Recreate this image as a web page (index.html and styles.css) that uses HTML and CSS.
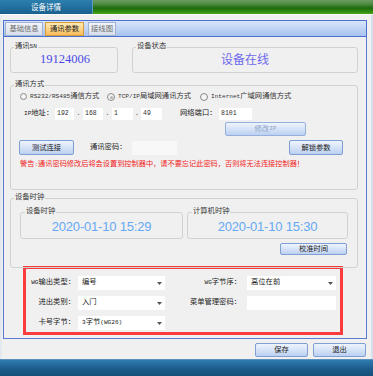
FILE: index.html
```html
<!DOCTYPE html>
<html>
<head>
<meta charset="utf-8">
<link rel="stylesheet" href="styles.css">
</head>
<body>
<div class="titlebar">
  <div class="title-tab">设备详情</div>
  <div class="title-rest"></div>
</div>
<div class="window">
  <div class="tabstrip">
    <div class="tab t1">基础信息</div>
    <div class="tab t2 active">通讯参数</div>
    <div class="tab t3">接线图</div>
    <div class="scroll"><span>◂</span><span>▸</span></div>
  </div>
  <div class="panel">
    <div class="row-top">
      <div class="group sn"><span class="cap">通讯<span class="en">SN</span></span><div class="sn-val">19124006</div></div>
      <div class="group status"><span class="cap">设备状态</span><div class="status-val">设备在线</div></div>
    </div>

    <div class="group comm">
      <span class="cap">通讯方式</span>
      <div class="radios">
        <div class="radio r1"><span class="dot"></span><span class="en">RS232/RS485</span>通信方式</div>
        <div class="radio r2"><span class="dot on"></span><span class="en">TCP/IP</span>局域网通讯方式</div>
        <div class="radio r3"><span class="dot"></span><span class="en">Internet</span>广域网通信方式</div>
      </div>
      <div class="iprow">
        <span class="lbl ip-lbl"><span class="en">IP</span>地址：</span>
        <span class="box ip1">192</span><span class="sep">.</span>
        <span class="box ip2">168</span><span class="sep">.</span>
        <span class="box ip3">1</span><span class="sep s3">.</span>
        <span class="box ip4">49</span>
        <span class="lbl port-lbl">网络端口：</span>
        <span class="box port">8101</span>
      </div>
      <div class="modrow"><div class="btn disabled modip">修改<span class="en">IP</span></div></div>
      <div class="btnrow">
        <div class="btn test">测试连接</div>
        <span class="lbl pw-lbl">通讯密码：</span>
        <span class="box pw"></span>
        <div class="btn unlock">解锁参数</div>
      </div>
      <div class="warn">警告<span class="en">:</span>通讯密码修改后将会设置到控制器中，请不要忘记此密码，否则将无法连接控制器！</div>
    </div>

    <div class="group clock">
      <span class="cap">设备时钟</span>
      <div class="clocks">
        <div class="group inner c1"><span class="cap">设备时钟</span><div class="date">2020-01-10 15:29</div></div>
        <div class="group inner c2"><span class="cap">计算机时钟</span><div class="date">2020-01-10 15:30</div></div>
      </div>
      <div class="calrow"><div class="btn cal">校准时间</div></div>
    </div>

    <div class="form">
      <span class="flbl l1"><span class="en">WG</span>输出类型：</span>
      <div class="select"><span>编号</span><svg class="arr" width="5" height="3" viewBox="0 0 5 3"><path d="M0 0H5L2.5 3Z" fill="#555"/></svg></div>
      <span class="flbl l2"><span class="en">WG</span>字节序：</span>
      <div class="select"><span>高位在前</span><svg class="arr" width="5" height="3" viewBox="0 0 5 3"><path d="M0 0H5L2.5 3Z" fill="#555"/></svg></div>

      <span class="flbl l1">进出类别：</span>
      <div class="select"><span>入门</span><svg class="arr" width="5" height="3" viewBox="0 0 5 3"><path d="M0 0H5L2.5 3Z" fill="#555"/></svg></div>
      <span class="flbl l2">菜单管理密码：</span>
      <div class="input"></div>

      <span class="flbl l1">卡号字节：</span>
      <div class="select"><span><span class="en">3</span>字节<span class="en">(WG26)</span></span><svg class="arr" width="5" height="3" viewBox="0 0 5 3"><path d="M0 0H5L2.5 3Z" fill="#555"/></svg></div>
    </div>
  </div>
  <div class="footer">
    <div class="btn fbtn">保存</div>
    <div class="btn fbtn">退出</div>
  </div>
</div>
<div class="taskbar"></div>
</body>
</html>
```

FILE: styles.css
```css
* { box-sizing: border-box; margin: 0; padding: 0; }
html, body { width: 373px; height: 376px; overflow: hidden; }
body {
  font-family: "Liberation Mono", "Noto Sans CJK SC", monospace;
  font-size: 7.3px;
  line-height: 1;
  color: #222;
  background: #f0f0f0;
}
.en { font-family: "Liberation Mono", monospace; font-size: 6.1px; }

/* title bar */
.titlebar { display: flex; height: 14px; }
.title-tab {
  width: 93px;
  background: linear-gradient(#2c7fae, #18608f);
  color: #fff;
  font-family: "Noto Sans CJK SC", sans-serif;
  font-size: 7.5px;
  display: flex; align-items: center; justify-content: center;
  border-right: 1px solid #5c9ac0;
}
.title-rest {
  flex: 1;
  background: linear-gradient(#6e9c60 0%, #4d8a42 30%, #1d6a0e 58%, #2c880f 78%, #47a31a 100%);
}

/* window */
.window {
  height: 345px;
  border-top: 1px solid #fdfdfd;
  padding: 5px 6px 0 3px;
  background: #f0f0f0;
  box-shadow: inset -2px 0 0 #d6e0ee, inset 2px 0 0 #e4e9f0;
}

.tabstrip {
  height: 17px;
  border: 1px solid #4c70d2;
  background: linear-gradient(#d8e6fb, #a8c3ee);
  display: flex;
  align-items: flex-start;
  padding: 1px 0 0 1px;
}
.tab {
  height: 14px;
  display: flex; align-items: center; justify-content: center;
  font-family: "Noto Sans CJK SC", sans-serif;
  font-size: 7.3px;
  color: #6c6c6c;
  border: 1px solid #a3b3cf;
  background: linear-gradient(#f1f4f9, #d7dfec);
}
.t1 { width: 38px; }
.t2 { width: 39px; margin-left: 2px; }
.t3 { width: 28px; margin-left: 4px; }
.tab.active {
  color: #222;
  border-color: #d99a3a;
  background: linear-gradient(#ffeab4, #f8bd5c);
}
.scroll {
  margin-left: auto; margin-right: 5px; margin-top: 3px;
  display: flex; gap: 4px;
  color: #c2d5f3; font-size: 7px;
}

.panel {
  height: 302px;
  border: 1px solid #5a7ad4;
  border-top: none;
  padding: 10px 8px 0 6px;
}

/* group boxes */
.group {
  position: relative;
  border: 1px solid #cdd3cd;
  border-radius: 3px;
}
.cap {
  position: absolute;
  top: -6px; left: 3px;
  padding: 0 1px;
  background: #f0f0f0;
  line-height: 9px;
  font-size: 7.3px;
  color: #333;
  white-space: nowrap;
}

.row-top { display: flex; gap: 14px; }
.sn { width: 108px; height: 26px; display: flex; align-items: center; justify-content: center; }
.status { width: 226px; height: 26px; display: flex; align-items: center; justify-content: center; }
.sn-val {
  font-family: "Liberation Serif", serif;
  font-size: 12.5px;
  color: #4a4ae6;
  margin-top: -1px;
  margin-left: 2px;
}
.status-val {
  font-family: "Noto Sans CJK SC", sans-serif;
  font-size: 12px;
  color: #6e68ee;
  margin-top: -3px;
}

/* communication */
.comm { margin-top: 12px; height: 105px; width: 348px; }
.radios { display: flex; align-items: center; height: 10px; margin-top: 6px; padding-left: 9px; color: #333; }
.radio { display: flex; align-items: center; white-space: nowrap; }
.r1 { width: 87px; }
.r2 { width: 93px; }
.dot {
  width: 7px; height: 7px; border-radius: 50%;
  border: 1px solid #8e8e8e;
  background: radial-gradient(#ffffff, #e2e2e2);
  margin-right: 3px;
  position: relative;
  flex: none;
}
.r2 .dot, .r3 .dot { width: 8px; height: 8px; }
.dot.on::after {
  content: "";
  position: absolute; left: 1.5px; top: 1.5px;
  width: 3px; height: 3px; border-radius: 50%;
  background: #b4b4b4;
}

.iprow { display: flex; align-items: center; height: 12px; margin-top: 6px; padding-left: 13px; }
.lbl { white-space: nowrap; color: #222; }
.ip-lbl { width: 31px; }
.box {
  height: 12px; background: #fff;
  display: flex; align-items: center;
  padding-left: 2px; font-size: 6.5px; color: #333;
}
.ip1 { width: 19px; }
.ip2 { width: 20px; }
.ip3 { width: 21px; }
.ip4 { width: 21px; }
.sep { width: 9px; text-align: center; color: #555; }
.s3 { width: 8px; }
.port-lbl { margin-left: 18px; width: 39px; }
.port { width: 33px; }

.btn {
  display: flex; align-items: center; justify-content: center;
  border: 1px solid #7f9ed3;
  border-radius: 2px;
  background: linear-gradient(#eef4fd 0%, #d6e3f7 50%, #bcd0f0 100%);
  font-family: "Noto Sans CJK SC", sans-serif;
  font-size: 7.3px;
  color: #222;
  white-space: nowrap;
}
.btn.disabled { color: #8ea3c9; border-color: #95b0dc; }

.modrow { margin-top: 2px; height: 14px; padding-left: 214px; }
.modip { width: 81px; height: 14px; }

.btnrow { display: flex; align-items: center; height: 15px; margin-top: 4px; }
.test { margin-left: 8px; width: 55px; height: 15px; }
.pw-lbl { margin-left: 16px; width: 38px; }
.pw { margin-left: 4px; width: 45px; height: 14px; background: #f8f8f8; }
.unlock { margin-left: auto; margin-right: 14px; width: 54px; height: 15px; }

.warn {
  margin-top: 5px; height: 9px; line-height: 9px;
  padding-left: 9px;
  color: #f21c1c;
  font-size: 7.2px;
  white-space: nowrap;
}

/* clock */
.clock { margin-top: 8px; height: 70px; width: 348px; }
.clocks { display: flex; gap: 4px; margin-top: 13px; padding-left: 9px; }
.inner { height: 27px; display: flex; align-items: center; justify-content: center; }
.c1 { width: 163px; }
.c2 { width: 161px; }
.inner .cap { left: 4px; }
.date {
  font-family: "Liberation Sans", sans-serif;
  font-size: 13px;
  letter-spacing: -0.2px;
  color: #66a8f4;
  margin-top: 1px;
}
.calrow { display: flex; justify-content: flex-end; margin-top: 4px; padding-right: 10px; }
.cal { width: 67px; height: 12px; }

/* highlighted form */
.form {
  margin-top: -2px;
  margin-left: 13px;
  width: 320px;
  height: 69px;
  border: 3px solid #fb3c3c;
  display: grid;
  grid-template-columns: 52px 87px 82px 89px;
  grid-auto-rows: 14px;
  row-gap: 6px;
  padding-top: 7px;
  align-content: start;
}
.flbl { align-self: center; text-align: right; white-space: nowrap; color: #222; }
.l1 { padding-right: 3px; }
.l2 { padding-right: 6px; }
.select {
  background: #fff;
  display: flex; align-items: center;
  padding-left: 4px;
  color: #222;
  white-space: nowrap;
}
.arr { margin-left: auto; margin-right: 3px; }
.input { background: #fff; }

/* footer */
.footer { height: 20px; display: flex; justify-content: flex-end; gap: 5px; padding-top: 4px; padding-right: 1px; }
.fbtn { width: 53px; height: 14px; }

.taskbar {
  height: 17px;
  background: linear-gradient(#2f7cb0, #1a5a88 60%, #164f7a);
  border-top: 1px solid #5a90bb;
}
```
